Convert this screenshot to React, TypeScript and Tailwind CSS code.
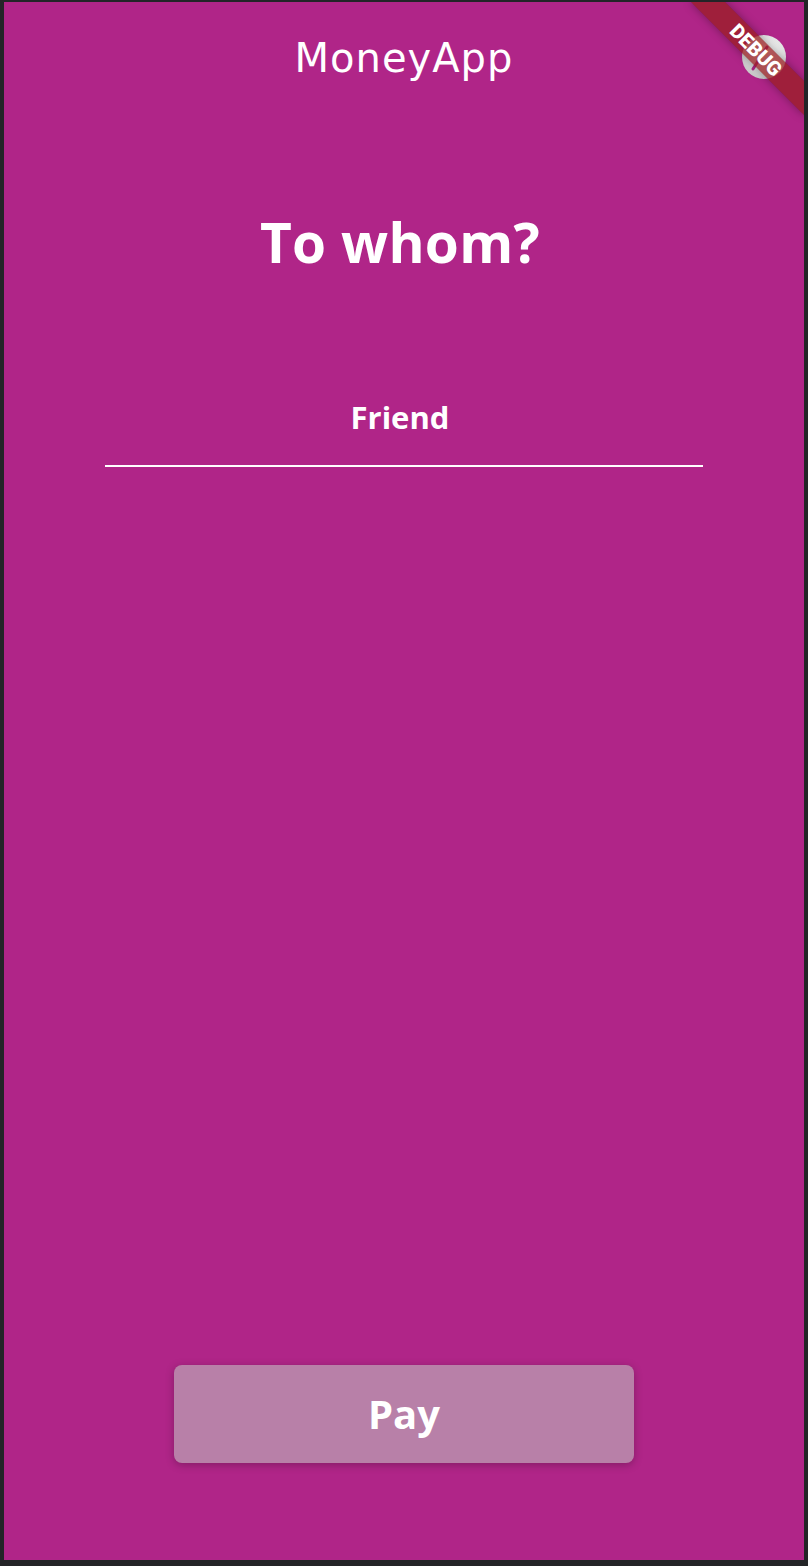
const App = () => {
  return (
    <div className="w-[808px] h-[1566px] bg-[#232427] pl-[4px] pt-[2px]">
      <div className="w-[800px] h-[1558px] relative overflow-hidden bg-[#b02588] flex flex-col items-center text-white">
        {/* app bar */}
        <div className="pt-[32px] text-[40px] leading-[48px] tracking-[1px] font-['DejaVu_Sans',sans-serif]">
          MoneyApp
        </div>
        <div className="absolute left-[738px] top-[33px] w-[44px] h-[44px] rounded-full bg-[radial-gradient(circle_at_60%_35%,#f6f6f6_0%,#dedede_50%,#b9b9b9_100%)]">
          <svg width="44" height="44" viewBox="0 0 44 44">
            <line x1="11" y1="34" x2="25" y2="12" stroke="#b02588" strokeWidth="3" strokeLinecap="round" />
          </svg>
        </div>

        <h1 className="mt-[122px] pr-[8px] text-[55px] leading-[76px] font-bold tracking-[0.3px] font-['Open_Sans',sans-serif]">
          To whom?
        </h1>

        <div className="mt-[115px] w-[598px] border-b-2 border-white pb-[26px] pr-[8px] text-center">
          <span className="text-[31px] leading-[44px] font-bold font-['Open_Sans',sans-serif]">Friend</span>
        </div>

        <button className="mt-auto mb-[97px] w-[460px] h-[98px] rounded-[8px] bg-[#b880a8] shadow-[0_2px_8px_rgba(0,0,0,0.25)] flex items-center justify-center text-[40px] font-bold font-['Open_Sans',sans-serif]">
          Pay
        </button>

        {/* debug banner */}
        <div className="absolute left-[672px] top-[36px] w-[160px] h-[24px] rotate-45 bg-[rgba(152,30,32,0.74)] shadow-[0_0_10px_rgba(0,0,0,0.35)] flex items-center justify-center">
          <span className="text-[20px] leading-[20px] font-black font-['Roboto',sans-serif]">DEBUG</span>
        </div>
      </div>
    </div>
  );
};

export default App;
